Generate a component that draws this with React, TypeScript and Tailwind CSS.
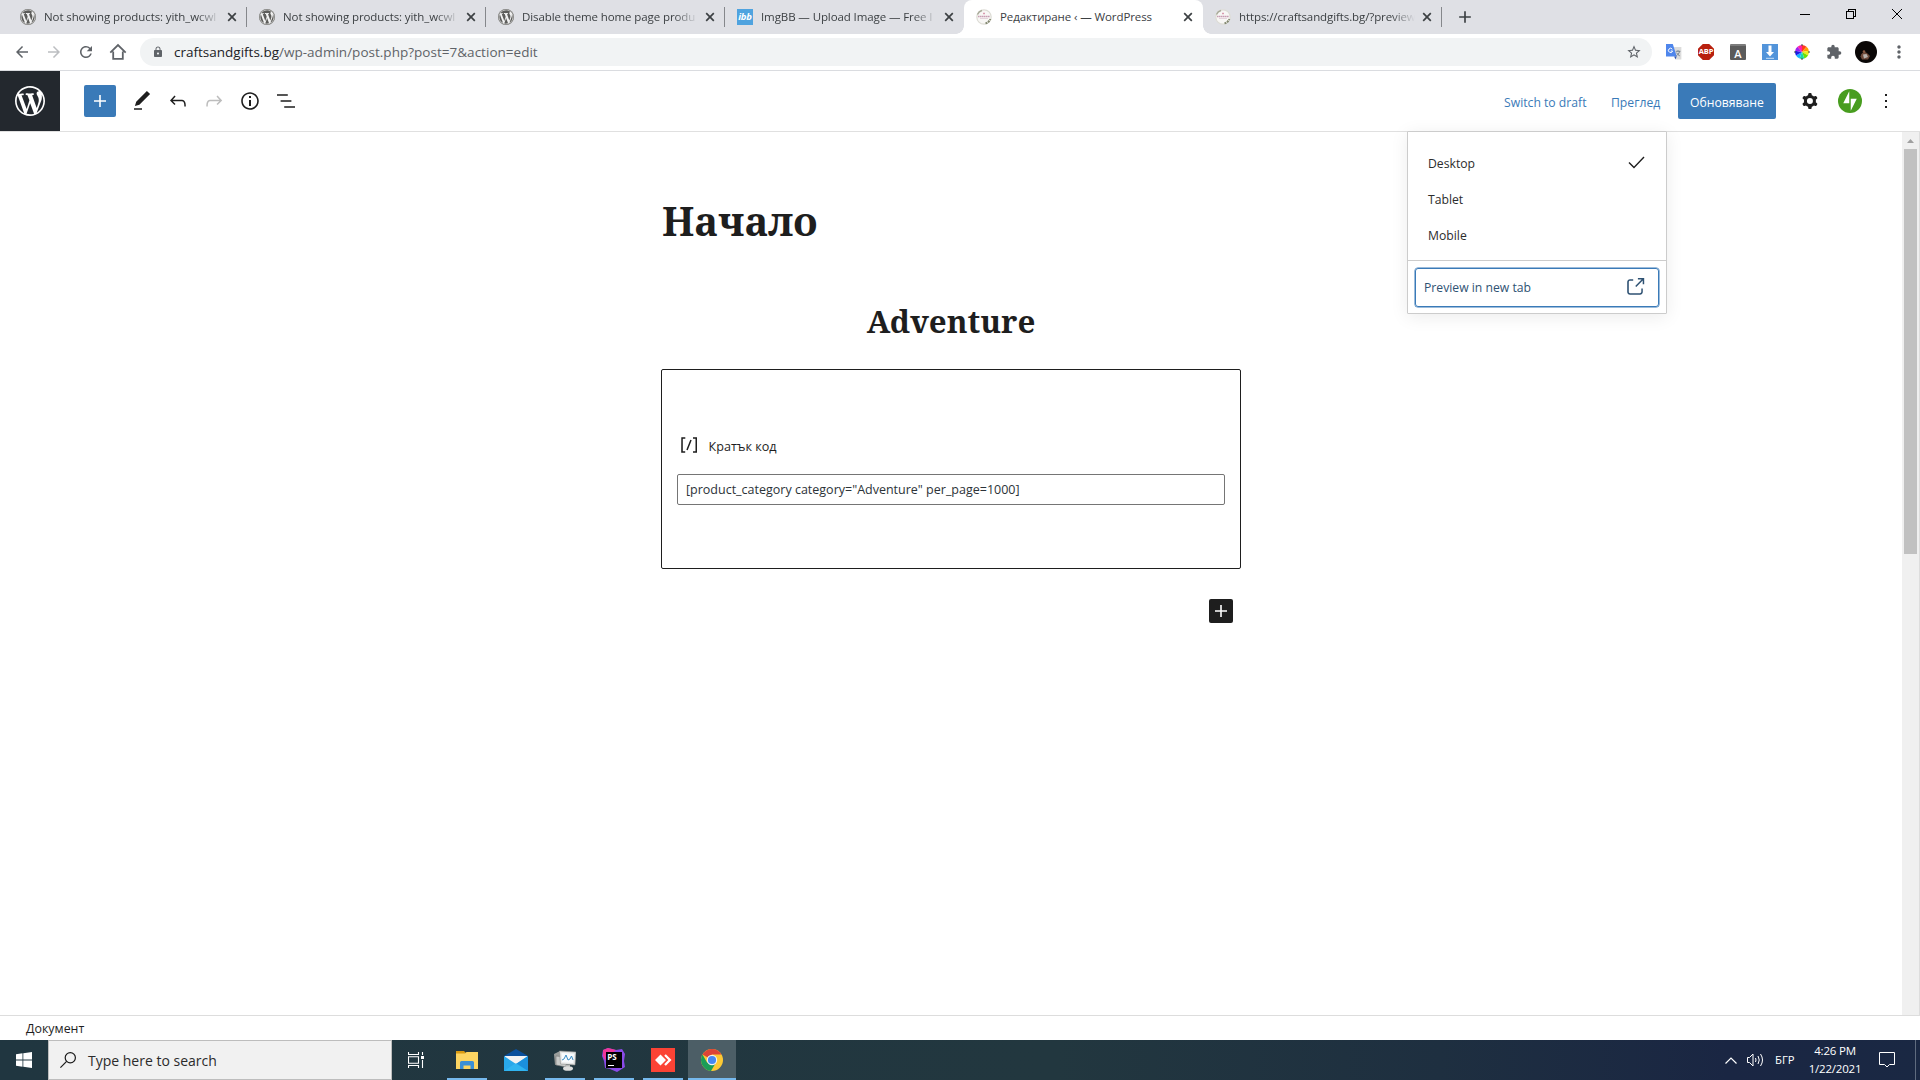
import type { ReactNode } from "react";
import {
  MdAdd,
  MdArrowBack,
  MdArrowForward,
  MdExtension,
  MdLock,
  MdMoreVert,
  MdRefresh,
  MdStarBorder,
} from "react-icons/md";

const WP_PATH =
  "M20 10c0-5.51-4.49-10-10-10C4.48 0 0 4.49 0 10c0 5.52 4.48 10 10 10 5.51 0 10-4.48 10-10zM7.78 15.37L4.37 6.22c.55-.02 1.17-.08 1.17-.08.5-.06.44-1.13-.06-1.11 0 0-1.45.11-2.37.11-.18 0-.37 0-.58-.01C4.12 2.69 6.87 1.11 10 1.11c2.33 0 4.45.87 6.05 2.34-.68-.11-1.65.39-1.65 1.58 0 .74.45 1.36.9 2.1.35.61.55 1.36.55 2.46 0 1.49-1.4 5-1.4 5l-3.03-8.37c.54-.02.82-.17.82-.17.5-.05.44-1.25-.06-1.22 0 0-1.44.12-2.38.12-.87 0-2.33-.12-2.33-.12-.5-.03-.56 1.2-.06 1.22l.92.08 1.26 3.41zM17.41 10c.24-.64.74-1.87.43-4.25.7 1.29 1.05 2.71 1.05 4.25 0 3.29-1.73 6.24-4.4 7.78.97-2.59 1.94-5.2 2.92-7.78zM6.1 18.09C3.12 16.65 1.11 13.53 1.11 10c0-1.3.23-2.48.72-3.59C3.25 10.3 4.67 14.2 6.1 18.09zm4.03-6.63l2.58 6.98c-.86.29-1.76.45-2.71.45-.79 0-1.57-.11-2.29-.33.81-2.38 1.62-4.74 2.42-7.1z";

const icons = {
  plus: "M18 11.2h-5.2V6h-1.6v5.2H6v1.6h5.2V18h1.6v-5.2H18z",
  edit: "M20.1 5.1L16.9 2 6.2 12.7l-1.3 4.4 4.5-1.3L20.1 5.1zM4 20.8h8v-1.5H4v1.5z",
  undo: "M18.3 11.7c-.6-.6-1.4-.9-2.3-.9H6.7l2.9-3.3-1.1-1-4.5 5L8.5 16l1-1-2.7-2.7H16c.5 0 .9.2 1.3.5 1 1 1 3.4 1 4.5v.3h1.5v-.2c0-1.5 0-4.3-1.5-5.7z",
  redo: "M15.6 6.5l-1.1 1 2.9 3.3H8c-.9 0-1.7.3-2.3.9-1.4 1.5-1.4 4.2-1.4 5.6v.2h1.5v-.3c0-1.1 0-3.5 1-4.5.3-.3.7-.5 1.3-.5h9.2L14.5 15l1.1 1.1 4.6-4.6-4.6-5z",
  info: "M12 3.2c-4.8 0-8.8 3.9-8.8 8.8 0 4.8 3.9 8.8 8.8 8.8 4.8 0 8.8-3.9 8.8-8.8 0-4.8-4-8.8-8.8-8.8zm0 16c-4 0-7.2-3.3-7.2-7.2C4.8 8 8 4.8 12 4.8s7.2 3.3 7.2 7.2c0 4-3.2 7.2-7.2 7.2zM11 17h2v-6h-2v6zm0-8h2V7h-2v2z",
  outline: "M13.8 5.2H3v1.5h10.8V5.2zm-3.6 12v1.5H21v-1.5H10.2zm7.2-6H6.6v1.5h10.8v-1.5z",
  cog: "M10.289 4.836A1 1 0 0111.275 4h1.306a1 1 0 01.987.836l.244 1.466c.787.26 1.503.679 2.108 1.218l1.393-.522a1 1 0 011.216.437l.653 1.13a1 1 0 01-.23 1.273l-1.148.944a6.025 6.025 0 010 2.435l1.149.946a1 1 0 01.23 1.272l-.653 1.13a1 1 0 01-1.216.437l-1.394-.522c-.605.54-1.32.958-2.108 1.218l-.244 1.466a1 1 0 01-.987.836h-1.306a1 1 0 01-.986-.836l-.244-1.466a5.995 5.995 0 01-2.108-1.218l-1.394.522a1 1 0 01-1.217-.436l-.653-1.131a1 1 0 01.23-1.272l1.149-.946a6.026 6.026 0 010-2.435l-1.148-.944a1 1 0 01-.23-1.272l.653-1.131a1 1 0 011.217-.437l1.393.522a5.994 5.994 0 012.108-1.218l.244-1.466zM14.929 12a3 3 0 11-6 0 3 3 0 016 0z",
  more: "M13 19h-2v-2h2v2zm0-6h-2v-2h2v2zm0-6h-2V5h2v2z",
  check: "M9 18.6L3.5 13l1-1L9 16.4l9.5-9.9 1 1z",
  external:
    "M18.2 17c0 .7-.6 1.2-1.2 1.2H7c-.7 0-1.2-.6-1.2-1.2V7c0-.7.6-1.2 1.2-1.2h3.2V4.2H7C5.5 4.2 4.2 5.5 4.2 7v10c0 1.5 1.2 2.8 2.8 2.8h10c1.5 0 2.8-1.2 2.8-2.8v-3.6h-1.5V17zM14.9 3v1.5h3.7l-6.4 6.4 1.1 1.1 6.4-6.4v3.7h1.5V3h-6.3z",
  shortcode:
    "M16 4.2v1.5h2.5v12.5H16v1.5h4V4.2h-4zM4.2 19.8h4v-1.5H5.8V5.8h2.5V4.2h-4l-.1 15.6zm5.1-3.1l1.4.6 4-10-1.4-.6-4 10z",
};

const Icon = ({ name, className = "size-6" }: { name: keyof typeof icons; className?: string }) => (
  <svg viewBox="0 0 24 24" fill="currentColor" fillRule="evenodd" className={`shrink-0 ${className}`}>
    <path d={icons[name]} />
  </svg>
);

const WpFavicon = () => (
  <svg viewBox="0 0 20 20" className="size-4 shrink-0">
    <circle cx="10" cy="10" r="10" fill="#8b8b89" />
    <circle cx="10" cy="10" r="8.6" fill="#5c5c5a" />
    <path d={WP_PATH} fill="#f1f1f1" transform="translate(.6 .6) scale(.94)" />
    <circle cx="10" cy="10" r="9.4" fill="none" stroke="#8b8b89" strokeWidth="1.2" />
  </svg>
);

const IbbFavicon = () => (
  <span className="flex size-4 shrink-0 items-center justify-center bg-[#4fa3df] text-[9.5px] leading-none font-bold tracking-tight text-white italic">
    ibb
  </span>
);

const CraftsFavicon = () => (
  <svg viewBox="0 0 16 16" className="size-4 shrink-0">
    <circle cx="8" cy="8" r="7.2" fill="#f8f7f5" stroke="#dddcd5" strokeWidth="1.2" />
    <path d="M1.5 5.5A7 7 0 0 1 6 1.5" stroke="#a9ab9a" strokeWidth="1.4" fill="none" />
    <path d="M9.5 14.3a7 7 0 0 0 4.8-4.3" stroke="#82876f" strokeWidth="2" strokeDasharray="2 .7" fill="none" />
    <path d="M2 7.5h12" stroke="#c79db2" strokeWidth="1.6" strokeDasharray="1.6 .4" />
    <path d="M7 4.5h2" stroke="#d99ab0" strokeWidth="1.4" />
    <path d="M4 9.5h8" stroke="#e3d3da" strokeWidth="1" />
  </svg>
);

type TabInfo = { title: string; icon: ReactNode; active?: boolean; divider?: boolean };

const tabs: TabInfo[] = [
  { title: "Not showing products: yith_wcwl", icon: <WpFavicon />, divider: true },
  { title: "Not showing products: yith_wcwl", icon: <WpFavicon />, divider: true },
  { title: "Disable theme home page produ", icon: <WpFavicon />, divider: true },
  { title: "ImgBB — Upload Image — Free I", icon: <IbbFavicon /> },
  { title: "Редактиране ‹ — WordPress", icon: <CraftsFavicon />, active: true },
  { title: "https://craftsandgifts.bg/?preview", icon: <CraftsFavicon />, divider: true },
];

const Tab = ({ title, icon, active, divider }: TabInfo) => (
  <div
    className={`relative flex h-[34px] w-[239px] shrink-0 items-center pl-3 ${
      active ? "rounded-t-lg bg-white" : ""
    }`}
  >
    {icon}
    <span
      className={`ml-2 w-[180px] text-[11.5px] tracking-[-0.1px] whitespace-nowrap text-[#3c4043] ${
        active ? "" : "[mask-image:linear-gradient(to_right,black_152px,transparent_176px)]"
      }`}
    >
      {title}
    </span>
    <svg viewBox="0 0 10 10" className="ml-[3px] size-[10px] shrink-0 text-[#3c4043]">
      <path d="M1.2 1.2l7.6 7.6M8.8 1.2L1.2 8.8" stroke="currentColor" strokeWidth="1.7" />
    </svg>
    {divider && <span className="absolute top-[7px] right-0 h-5 w-px bg-[#85878b]" />}
    {active && (
      <>
        <span className="absolute bottom-0 -left-2 size-2 bg-[radial-gradient(circle_at_0_0,#dfe0e5_7.5px,white_8px)]" />
        <span className="absolute -right-2 bottom-0 size-2 bg-[radial-gradient(circle_at_100%_0,#dfe0e5_7.5px,white_8px)]" />
      </>
    )}
  </div>
);

const TabStrip = () => (
  <div className="flex h-[34px] shrink-0 bg-[#dfe0e5] pl-2">
    {tabs.map((tab, i) => (
      <Tab key={i} {...tab} />
    ))}
    <MdAdd className="mt-[7px] ml-[13px] size-5 text-[#3c4043]" />
    <div className="mt-[9px] mr-[18px] ml-auto flex gap-9 text-black">
      <svg viewBox="0 0 10 10" className="size-[10px]" shapeRendering="crispEdges">
        <path d="M0 5.5h10" stroke="currentColor" />
      </svg>
      <svg viewBox="0 0 10 10" className="size-[10px]" fill="none" stroke="currentColor" shapeRendering="crispEdges">
        <path d="M.5 2.5h7v7h-7zM2.5 2.5v-2h7v7h-2" />
      </svg>
      <svg viewBox="0 0 10 10" className="size-[10px]">
        <path d="M0 0l10 10M10 0L0 10" stroke="currentColor" />
      </svg>
    </div>
  </div>
);

const wheel = ["#ff3b1f", "#ff9d00", "#e9ec1a", "#6ee000", "#19d9a0", "#16b4ff", "#1a1ae6", "#a020f0", "#ff1fa5"];

const Extensions = () => (
  <div className="flex items-center gap-4">
    <svg viewBox="0 0 16 16" className="size-4">
      <path d="M6 3h9.4v12.4H10z" fill="#dcdcdc" />
      <path d="M9.8 7.3h4.6M12 6.2v1M13.6 7.3c-.5 2.3-2 3.8-3.4 4.6M10.6 8.7c.6 1.4 1.8 2.6 3.2 3.2" stroke="#6f7f8c" strokeWidth=".9" fill="none" />
      <path d="M0 0h6.8l3.9 12.4H0z" fill="#4f86ec" />
      <path d="M8.2 12.4h2.5L9.4 15.6z" fill="#3257b0" />
      <path d="M6.3 5.2A2.1 2.1 0 1 0 6.6 7H4.8" stroke="#fff" strokeWidth="1" fill="none" />
    </svg>
    <span className="flex size-4 items-center justify-center bg-[#b8200f] text-[7.5px] leading-none font-bold tracking-tight text-white [clip-path:polygon(30%_0,70%_0,100%_30%,100%_70%,70%_100%,30%_100%,0_70%,0_30%)]">
      ABP
    </span>
    <span className="flex size-4 items-center justify-center rounded-[1px] border-t-2 border-[#7c7c7c] bg-[#5b5b5b] text-[11px] leading-none font-semibold text-white">
      A
    </span>
    <svg viewBox="0 0 16 16" className="size-4">
      <path d="M0 0h16v16H0z" fill="#5294da" />
      <path d="M6.5 1.5h3V8H12l-4 4.4L4 8h2.5z" fill="#fff" />
      <path d="M4 14.3h8" stroke="#c9dff5" strokeWidth="1" />
    </svg>
    <svg viewBox="-8 -8 16 16" className="size-4">
      {wheel.map((color, i) => (
        <path key={color} d="M0 0L0-7A7 7 0 0 1 4.5-5.36z" fill={color} transform={`rotate(${i * 40})`} />
      ))}
      <path d="M0-8v2M0 8V6M-8 0h2M8 0H6" stroke="#444" strokeWidth="1" />
    </svg>
    <MdExtension className="size-4 text-[#5f6368]" />
    <svg viewBox="0 0 22 22" className="-mx-[3px] size-[22px]">
      <circle cx="11" cy="11" r="11" fill="#0a0706" />
      <path d="M5.5 15.5c1-3.5 2.5-4.5 4-4.5s3.5 2 5.5 4l-2 3.5H7z" fill="#6e4a3a" />
      <path d="M8 13.5l3.5-.5 1.5 3-4 1.5z" fill="#b9b3ae" />
      <circle cx="9" cy="10.5" r="1.3" fill="#8a5a42" />
    </svg>
    <MdMoreVert className="-mr-px -ml-px size-5 text-[#5f6368]" />
  </div>
);

const AddressBar = () => (
  <div className="flex h-[37px] shrink-0 items-center border-b border-[#dadce0] bg-white pr-[12px]">
    <div className="ml-[13px] flex items-center gap-[14px] text-[#5f6368]">
      <MdArrowBack className="size-[18px]" />
      <MdArrowForward className="size-[18px] text-[#bcbec1]" />
      <MdRefresh className="size-[18px]" />
      <svg viewBox="0 0 18 18" className="size-[18px]" fill="none" stroke="currentColor" strokeWidth="1.8">
        <path d="M1.3 9.7L9 2l7.7 7.7M4.2 8.5v7.4h9.6V8.5" />
      </svg>
    </div>
    <div className="mr-[14px] ml-[13px] flex h-7 flex-1 items-center rounded-full bg-[#f1f3f4] pr-[10px] pl-3">
      <MdLock className="size-3 text-[#5f6368]" />
      <span className="ml-[10px] pt-px text-[13.5px] text-[#5f6368]">
        <span className="text-[#202124]">craftsandgifts.bg</span>
        <span className="tracking-[0.02px]">/wp-admin/post.php?post=7&amp;action=edit</span>
      </span>
      <MdStarBorder className="ml-auto size-4 text-[#5f6368]" />
    </div>
    <Extensions />
  </div>
);

const PreviewMenu = () => (
  <div className="absolute top-[60px] left-[1407px] z-10 h-[183px] w-[260px] rounded-[1px] border border-[#ccc] bg-white text-[#2c2c2c] shadow-[0_3px_18px_rgba(0,0,0,0.08)]">
    <div className="flex h-[129px] flex-col border-b border-[#ccc] pt-[14px] pr-[17px] pl-5">
      <div className="flex h-9 items-center justify-between">
        Desktop <Icon name="check" className="-mt-1 size-6 text-[#1e1e1e]" />
      </div>
      <div className="flex h-9 items-center">Tablet</div>
      <div className="flex h-9 items-center">Mobile</div>
    </div>
    <div className="mr-[7px] ml-[7px] mt-[7px] flex h-[39px] items-center justify-between rounded-[3px] border border-[#3a7ab8] pr-[11px] pl-2 text-[#2f5273] shadow-[0_0_0_0.5px_#3a7ab8]">
      <span className="pt-px">Preview in new tab</span>
      <Icon name="external" className="-mt-px size-6" />
    </div>
  </div>
);

const EditorHeader = () => (
  <header className="relative flex h-[61px] shrink-0 items-center border-b border-[#e0e0e0] bg-white text-[12.2px] text-[#1e1e1e]">
    <div className="flex size-[60px] items-center justify-center bg-[#23282e]">
      <svg viewBox="0 0 20 20" className="size-[30px]" fill="white">
        <path d={WP_PATH} />
      </svg>
    </div>
    <div className="ml-6 flex size-8 items-center justify-center rounded-[2px] bg-[#3a7ab8] text-white">
      <Icon name="plus" />
    </div>
    <div className="ml-[14px] flex items-center gap-3">
      <Icon name="edit" />
      <Icon name="undo" />
      <Icon name="redo" className="size-6 text-[#bdbdbd]" />
      <Icon name="info" />
      <Icon name="outline" />
    </div>
    <div className="ml-auto flex items-center text-[#3a7ab8]">
      <span className="w-[84px] pt-[4px] whitespace-nowrap">Switch to draft</span>
      <span className="ml-[23px] w-[50px] pt-[4px] whitespace-nowrap">Преглед</span>
      <button className="ml-[17px] h-9 w-[98px] rounded-[2px] bg-[#3a7ab8] pt-[4px] text-center whitespace-nowrap text-white">
        Обновяване
      </button>
    </div>
    <div className="mr-[22px] ml-[22px] flex items-center">
      <Icon name="cog" />
      <svg viewBox="0 0 32 32" className="ml-[16px] size-6">
        <circle cx="16" cy="16" r="16" fill="#489d1f" />
        <path d="M15 19H7l8-16zM17 29V13h8z" fill="#fff" />
      </svg>
      <Icon name="more" className="ml-[12px] size-6" />
    </div>
    <PreviewMenu />
  </header>
);

const Canvas = () => (
  <main className="flex min-h-0 flex-1 bg-white text-[#1e1e1e]">
    <div className="flex-1">
      <div className="ml-[661px] w-[580px]">
        <h1 className="mt-[60px] pl-px font-['Noto_Serif','DejaVu_Serif',serif] text-[40px] leading-[58px] font-bold">
          Начало
        </h1>
        <h2 className="mt-12 text-center font-['Noto_Serif','DejaVu_Serif',serif] text-[31.25px] leading-[46px] font-bold">
          Adventure
        </h2>
        <div className="mt-[25px] h-[200px] rounded-[2px] border border-[#1e1e1e] px-[15px] pt-[63px]">
          <div className="flex h-6 items-center">
            <Icon name="shortcode" className="size-6" />
            <span className="ml-[7.5px] pt-[4px] text-[12.6px] font-medium">Кратък код</span>
          </div>
          <div className="mt-[17px] flex h-[31px] items-center rounded-[2px] border border-[#757575] pt-[2px] pl-2 text-[12.5px] text-[#2c3338]">
            [product_category category="Adventure" per_page=1000]
          </div>
        </div>
        <div className="mt-[30px] mr-2 ml-auto flex size-6 items-center justify-center rounded-[2px] bg-[#1e1e1e] text-white">
          <Icon name="plus" />
        </div>
      </div>
    </div>
    <div className="flex w-[18px] flex-col items-center border-r border-[#ddd] bg-[#f0f0f0]">
      <svg viewBox="0 0 7 4" className="mt-[7px] h-1 w-[7px]" fill="#a0a0a0">
        <path d="M3.5 0L7 4H0z" />
      </svg>
      <div className="mt-[6px] h-[405px] w-[13px] bg-[#c1c1c1]" />
    </div>
  </main>
);

const TaskItem = ({ children, className = "w-10 mr-[9px]" }: { children: ReactNode; className?: string }) => (
  <div className={`flex h-10 flex-col items-center border-b-2 border-[#76b9ed] pt-2 ${className}`}>{children}</div>
);

const Taskbar = () => (
  <footer className="flex h-10 shrink-0 items-center bg-[linear-gradient(90deg,#203640_0%,#22373f_55%,#1e2f40_75%,#1a2643_90%,#1a2843_100%)] text-white">
    <div className="flex w-12 justify-center">
      <svg viewBox="0 0 16 16" className="size-4" fill="white">
        <path d="M0 2.2L6.5 1.3v6.3H0zM7.3 1.2L16 0v7.6H7.3zM0 8.4h6.5v6.3L0 13.8zM7.3 8.4H16V16l-8.7-1.2z" />
      </svg>
    </div>
    <div className="flex h-10 w-[344px] items-center border border-[#bdbdbd] bg-[#f1f1f1] pl-[11px] text-[#2b2b2b]">
      <svg viewBox="0 0 16 16" className="size-4" fill="none" stroke="#1a1a1a" strokeWidth="1.2">
        <circle cx="10.3" cy="5.7" r="5.1" />
        <path d="M6.6 9.4L.4 15.6" />
      </svg>
      <span className="ml-[12px] text-[14px]">Type here to search</span>
    </div>
    <div className="flex w-[55px] pl-4">
      <svg viewBox="0 0 16 16" className="size-4" fill="none" stroke="white" strokeWidth="1.1">
        <path d="M.5 0v2.5h10V0M.5 16v-2.5h10V16M.5 4.7h10v6.6H.5zM14.5 0v3M14.5 8v8" />
        <path d="M13 4h3v3h-3z" fill="white" stroke="none" />
      </svg>
    </div>
    <TaskItem>
      <svg viewBox="0 0 22 24" className="h-6 w-[22px]">
        <path d="M0 3h8l2 2h12v3H0z" fill="#d99a12" />
        <path d="M0 5.5h9L10.5 4H22v17H0z" fill="#fcd462" />
        <path d="M4 21v-6.5q0-1.5 1.5-1.5h11q1.5 0 1.5 1.5V21h-3.5v-3.5h-7V21z" fill="#3b8fd6" />
      </svg>
    </TaskItem>
    <div className="mr-[17px] ml-[8px] w-6">
      <svg viewBox="0 0 24 24" className="size-6">
        <path d="M0 8l12-7 12 7v4H0z" fill="#0a4f9c" />
        <path d="M1 8h22v10H1z" fill="#f2f2f2" />
        <path d="M0 8l12 8L24 8v15H0z" fill="#29a8ea" />
        <path d="M12 16L24 8v15z" fill="#1b90dd" />
        <path d="M0 23l12-8 12 8z" fill="#35bdf3" opacity=".6" />
      </svg>
    </div>
    <TaskItem>
      <svg viewBox="0 0 22 24" className="h-6 w-[22px]">
        <path d="M0 6l6-3v13l-5 1z" fill="#9a9d9b" />
        <path d="M2 8l10 1v10L2 17z" fill="#c9cbc9" stroke="#777" strokeWidth=".6" />
        <path d="M5.5 3L22 4l-1 13-14.5-1z" fill="#e6e7e6" stroke="#8d8f8d" strokeWidth=".6" />
        <path d="M7.5 5l12.5.8-.8 9.2L8 14.3z" fill="#f8fbfd" />
        <path d="M8 12l2-1 2-4 2 5 2-1 1.5-3 1.5 4" stroke="#3a8cc4" fill="none" />
        <path d="M12 17h4v2h-4z" fill="#b5b7b5" />
        <ellipse cx="14" cy="20.5" rx="5" ry="2.3" fill="#dcdddc" />
      </svg>
    </TaskItem>
    <TaskItem>
      <svg viewBox="0 0 24 24" className="size-6">
        <path d="M1 2l5-2 8 2 6-1 3 5-1 7 1 6-8 5-7-3-5-1-1-7-2-5z" fill="#8a4be8" />
        <path d="M1 2l5-2 8 2-6 5-5 5-2-4z" fill="#f0379b" />
        <path d="M4 4h16v16H4z" fill="#000" />
        <text x="5.3" y="12" fontSize="8" fontWeight="700" fill="#fff">
          PS
        </text>
        <path d="M6 17.5h6" stroke="#fff" strokeWidth="1" />
      </svg>
    </TaskItem>
    <TaskItem className="mr-[5px] w-10">
      <svg viewBox="0 0 24 24" className="size-6">
        <path d="M0 0h24v24H0z" fill="#fb4335" />
        <path d="M9.5 6.5L15 12l-5.5 5.5L4 12zM13.2 7.8l1.6-1.6L20.5 12l-5.7 5.8-1.6-1.6L17.3 12z" fill="#fff" />
      </svg>
    </TaskItem>
    <TaskItem className="w-12 bg-[#4c5e66]">
      <svg viewBox="0 0 24 24" className="size-6">
        <circle cx="12" cy="12" r="11" fill="#fcc934" />
        <path d="M12 12L2.5 6.5A11 11 0 0 1 21.5 6.5H12z" fill="#dd4437" />
        <path d="M2.5 6.5A11 11 0 0 0 11 23l5-8.5L12 12 7.2 14.7z" fill="#1a9d57" />
        <circle cx="12" cy="12" r="5.2" fill="#f4f4f4" />
        <circle cx="12" cy="12" r="4.1" fill="#4688f1" />
      </svg>
    </TaskItem>
    <div className="ml-auto flex items-center">
      <svg viewBox="0 0 12 7" className="h-[7px] w-3" fill="none" stroke="white" strokeWidth="1.2">
        <path d="M.5 6.5L6 1l5.5 5.5" />
      </svg>
      <svg viewBox="0 0 17 14" className="ml-[10px] h-[14px] w-[17px]" fill="none" stroke="white">
        <path d="M.5 4.5h2l3.5-3.5v12l-3.5-3.5h-2z" />
        <path d="M8.5 5q1 2 0 4M11 3q2.5 4 0 8M13.5 1q4 6 0 12" />
      </svg>
      <span className="ml-[11px] w-5 text-[11.3px] whitespace-nowrap">БГР</span>
      <div className="ml-[13px] w-[54px] text-center text-[11.5px] leading-[18px] tracking-[-0.2px] whitespace-nowrap">
        <div>4:26 PM</div>
        <div>1/22/2021</div>
      </div>
      <svg viewBox="0 0 16 16" className="ml-[17px] size-4" fill="none" stroke="white">
        <path d="M.5.5h15v12h-5L8 15l-2.5-2.5h-5z" />
      </svg>
      <span className="mr-[4px] ml-[20px] h-10 w-px bg-[#5f6b7e]" />
    </div>
  </footer>
);

export default function App() {
  return (
    <div className="flex h-[1080px] w-[1920px] flex-col overflow-hidden bg-white font-['Open_Sans','Noto_Sans',sans-serif]">
      <TabStrip />
      <AddressBar />
      <EditorHeader />
      <Canvas />
      <div className="flex h-[25px] shrink-0 items-center border-t border-[#ddd] pt-[2px] pl-[26px] text-[12.4px] text-[#1e1e1e]">
        Документ
      </div>
      <Taskbar />
    </div>
  );
}
